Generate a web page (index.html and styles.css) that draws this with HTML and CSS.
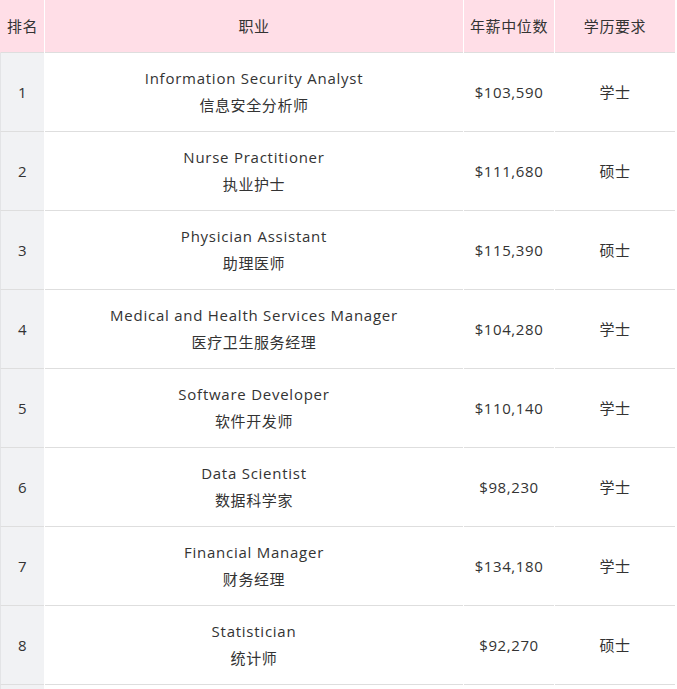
FILE: index.html
```html
<!DOCTYPE html>
<html lang="zh">
<head>
<meta charset="utf-8">
<title>职业排名</title>
<link rel="stylesheet" href="styles.css">
</head>
<body>
<table class="jobs">
  <thead>
    <tr>
      <th class="c-rank">排名</th>
      <th class="c-job">职业</th>
      <th class="c-pay">年薪中位数</th>
      <th class="c-edu">学历要求</th>
    </tr>
  </thead>
  <tbody>
    <tr><td class="c-rank">1</td><td class="c-job"><div class="en">Information Security Analyst</div><div class="zh">信息安全分析师</div></td><td class="c-pay">$103,590</td><td class="c-edu">学士</td></tr>
    <tr><td class="c-rank">2</td><td class="c-job"><div class="en">Nurse Practitioner</div><div class="zh">执业护士</div></td><td class="c-pay">$111,680</td><td class="c-edu">硕士</td></tr>
    <tr><td class="c-rank">3</td><td class="c-job"><div class="en">Physician Assistant</div><div class="zh">助理医师</div></td><td class="c-pay">$115,390</td><td class="c-edu">硕士</td></tr>
    <tr><td class="c-rank">4</td><td class="c-job"><div class="en">Medical and Health Services Manager</div><div class="zh">医疗卫生服务经理</div></td><td class="c-pay">$104,280</td><td class="c-edu">学士</td></tr>
    <tr><td class="c-rank">5</td><td class="c-job"><div class="en">Software Developer</div><div class="zh">软件开发师</div></td><td class="c-pay">$110,140</td><td class="c-edu">学士</td></tr>
    <tr><td class="c-rank">6</td><td class="c-job"><div class="en">Data Scientist</div><div class="zh">数据科学家</div></td><td class="c-pay">$98,230</td><td class="c-edu">学士</td></tr>
    <tr><td class="c-rank">7</td><td class="c-job"><div class="en">Financial Manager</div><div class="zh">财务经理</div></td><td class="c-pay">$134,180</td><td class="c-edu">学士</td></tr>
    <tr><td class="c-rank">8</td><td class="c-job"><div class="en">Statistician</div><div class="zh">统计师</div></td><td class="c-pay">$92,270</td><td class="c-edu">硕士</td></tr>
    <tr><td class="c-rank">9</td><td class="c-job"><div class="en">Lawyer</div><div class="zh">律师</div></td><td class="c-pay">$127,990</td><td class="c-edu">博士</td></tr>
    <tr><td class="c-rank">10</td><td class="c-job"><div class="en">Actuary</div><div class="zh">精算师</div></td><td class="c-pay">$111,030</td><td class="c-edu">学士</td></tr>
  </tbody>
</table>
</body>
</html>
```
FILE: styles.css
```css
html, body {
  margin: 0;
  padding: 0;
  background: #ffffff;
}

body {
  font-family: "Open Sans", "Noto Sans CJK SC", sans-serif;
  font-size: 15px;
  color: #333333;
  letter-spacing: 0.6px;
}

.jobs {
  width: 677px;
  border-collapse: separate;
  border-spacing: 1px 0;
  margin-left: -1px;
  table-layout: fixed;
  background: #ffffff;
}

.jobs th,
.jobs td {
  text-align: center;
  vertical-align: middle;
  line-height: 27px;
  font-weight: normal;
  border-bottom: 1px solid #dedede;
}

.jobs th {
  background: #ffdee7;
  padding: 13px 6px 12px;
}

.jobs td {
  padding: 12px 6px;
}

.jobs th.c-rank,
.jobs td.c-rank {
  width: 43px;
  padding-left: 0;
  padding-right: 0;
}

.jobs td.c-rank {
  background: #f1f2f4;
  border-left: 1px solid #e3e4e6;
}

.jobs th.c-rank {
  border-left: 1px solid #ffdee7;
}

.c-job {
  width: 406px;
}

.c-pay {
  width: 78px;
}

.c-edu {
  width: auto;
}

.en {
  letter-spacing: 0.75px;
}
```
